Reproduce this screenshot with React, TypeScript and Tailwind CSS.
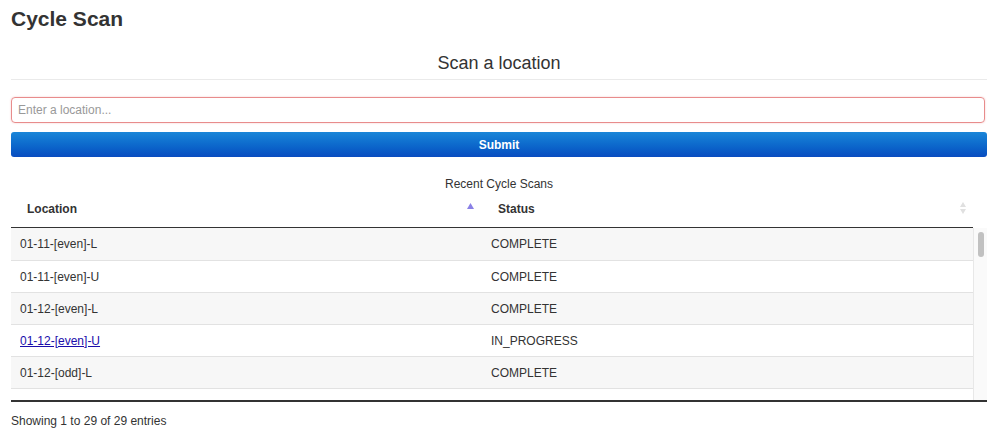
const scans: [string, string][] = [
  ["01-11-[even]-L", "COMPLETE"],
  ["01-11-[even]-U", "COMPLETE"],
  ["01-12-[even]-L", "COMPLETE"],
  ["01-12-[even]-U", "IN_PROGRESS"],
  ["01-12-[odd]-L", "COMPLETE"],
  ["01-12-[odd]-U", "COMPLETE"],
  ["01-13-[even]-L", "COMPLETE"],
  ["01-13-[even]-U", "COMPLETE"],
  ["01-13-[odd]-L", "COMPLETE"],
  ["01-13-[odd]-U", "COMPLETE"],
  ["01-14-[even]-L", "COMPLETE"],
  ["01-14-[even]-U", "COMPLETE"],
  ["01-14-[odd]-L", "COMPLETE"],
  ["01-14-[odd]-U", "COMPLETE"],
  ["01-15-[even]-L", "COMPLETE"],
  ["01-15-[even]-U", "COMPLETE"],
  ["01-15-[odd]-L", "COMPLETE"],
  ["01-15-[odd]-U", "COMPLETE"],
  ["01-16-[even]-L", "COMPLETE"],
  ["01-16-[even]-U", "COMPLETE"],
  ["01-16-[odd]-L", "COMPLETE"],
  ["01-16-[odd]-U", "COMPLETE"],
  ["01-17-[even]-L", "COMPLETE"],
  ["01-17-[even]-U", "COMPLETE"],
  ["01-17-[odd]-L", "COMPLETE"],
  ["01-17-[odd]-U", "COMPLETE"],
  ["01-18-[even]-L", "COMPLETE"],
  ["01-18-[even]-U", "COMPLETE"],
  ["01-18-[odd]-L", "COMPLETE"],
];

function SortAsc() {
  return (
    <svg width="7" height="6" viewBox="0 0 7 6" className="shrink-0">
      <path d="M3.5 0 L7 6 L0 6 Z" fill="#8a80e6" />
    </svg>
  );
}

function SortBoth() {
  return (
    <svg width="6" height="12" viewBox="0 0 6 12" className="shrink-0">
      <path d="M3 0 L6 5 L0 5 Z" fill="#e0e0e0" />
      <path d="M3 12 L6 7 L0 7 Z" fill="#e0e0e0" />
    </svg>
  );
}

// the browser hides native scrollbars, so the track is drawn by hand
function ScrollTrack() {
  return (
    <div className="w-[14px] shrink-0 bg-[#fafafa] border-l border-[#e8e8e8] pt-[4px] flex justify-center">
      <div className="w-[6px] h-[25px] rounded-full bg-[#c1c1c1]" />
    </div>
  );
}

function ScanTable() {
  return (
    <section className="flex flex-col">
      <p className="text-center text-[12px] leading-[16px] mt-[19px]">Recent Cycle Scans</p>

      <div className="grid grid-cols-[470px_1fr] mr-[14px] mt-[1px] h-[35px] pb-[3px] border-b border-[#333] font-bold text-[12px]">
        <div className="flex items-center justify-between pl-[16px] pr-[7px]">
          <span>Location</span>
          <span className="-mt-[6px]">
            <SortAsc />
          </span>
        </div>
        <div className="flex items-center justify-between pl-[17px] pr-[7px]">
          <span>Status</span>
          <span className="-mt-[2px]">
            <SortBoth />
          </span>
        </div>
      </div>

      <div className="flex h-[174px] border-b-2 border-[#333]">
        <div className="flex-1 overflow-hidden">
          {scans.map(([loc, status], i) => (
            <div
              key={loc}
              className={`grid grid-cols-[470px_1fr] h-[32px] items-center text-[12px] ${
                i > 0 ? "border-t border-[#e2e2e2]" : ""
              } ${i % 2 === 0 ? "bg-[#f7f7f7]" : "bg-white"}`}
            >
              <div className="pl-[9px]">
                {status === "IN_PROGRESS" ? (
                  <a href="#" className="text-[#1a0dab] underline">
                    {loc}
                  </a>
                ) : (
                  loc
                )}
              </div>
              <div className="pl-[10px]">{status}</div>
            </div>
          ))}
        </div>
        <ScrollTrack />
      </div>

      <p className="text-[12px] leading-[16px] mt-[11px]">Showing 1 to 29 of 29 entries</p>
    </section>
  );
}

export default function App() {
  return (
    <div className="w-[1000px] h-[445px] overflow-hidden bg-white pl-[11px] pr-[13px] text-[#333] font-['Liberation_Sans',Arial,sans-serif]">
      <h1 className="text-[21px] leading-[24px] font-bold pt-[7px]">Cycle Scan</h1>

      <h2 className="text-center text-[18px] leading-[22px] mt-[21px] pb-[5px] border-b border-[#eaeaea]">
        Scan a location
      </h2>

      <form className="flex flex-col" onSubmit={(e) => e.preventDefault()}>
        <input
          type="text"
          placeholder="Enter a location..."
          className="mt-[17px] mr-[2px] h-[26px] rounded-[4px] border border-[#e88c8c] px-[6px] text-[12px] placeholder:text-[#999] outline-none shadow-[0_0_2px_rgba(232,120,120,0.4)]"
        />
        <button
          type="submit"
          className="mt-[9px] h-[25px] rounded-[3px] bg-gradient-to-b from-[#1b86d8] to-[#0a4cc0] text-white text-[12px] font-bold"
        >
          Submit
        </button>
      </form>

      <ScanTable />
    </div>
  );
}
